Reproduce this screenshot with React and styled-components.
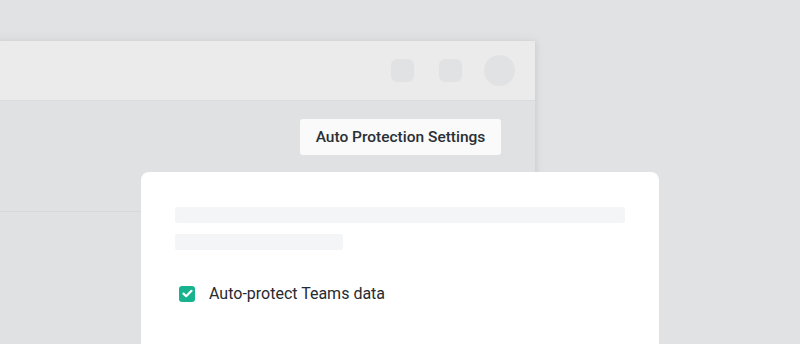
import React from 'react';
import styled, { createGlobalStyle } from 'styled-components';

const GlobalStyle = createGlobalStyle`
	html, body {
		margin: 0;
		padding: 0;
		background: #e1e2e4;
		font-family: Roboto, "Liberation Sans", sans-serif;
		overflow: hidden;
	}
`;

const Stage = styled.div`
	position: relative;
	width: 800px;
	height: 344px;
	overflow: hidden;
	padding-top: 41px;
	box-sizing: border-box;
`;

const Window = styled.div`
	margin-left: -10px;
	width: 545px;
	height: 340px;
	background: #e0e1e3;
	box-shadow: 0 0 12px rgba(0, 0, 0, 0.06), 2px 0 4px rgba(0, 0, 0, 0.04);
	display: flex;
	flex-direction: column;
`;

const Toolbar = styled.div`
	height: 59px;
	background: #ebebeb;
	border-bottom: 1px solid #dadbdd;
	display: flex;
	align-items: center;
	justify-content: flex-end;
	padding-right: 20px;
	gap: 25px;
`;

const ToolButton = styled.div`
	width: ${p => p.round ? 31 : 23}px;
	height: ${p => p.round ? 31 : 23}px;
	border-radius: ${p => p.round ? '50%' : '6px'};
	background: #e1e2e4;
	margin-left: ${p => p.round ? -3 : 0}px;
`;

const Body = styled.div`
	height: 111px;
	border-bottom: 1px solid #d8d9db;
	display: flex;
	justify-content: flex-end;
	align-items: flex-start;
	padding: 18px 34px 0 0;
	box-sizing: border-box;
`;

const SettingsButton = styled.button`
	width: 201px;
	height: 36px;
	border: none;
	border-radius: 3px;
	background: #fafafa;
	color: #2b2f36;
	font-family: Roboto, "Liberation Sans", sans-serif;
	font-size: 15.5px;
	font-weight: 500;
	padding: 0;
`;

const Card = styled.div`
	position: absolute;
	left: 141px;
	top: 172px;
	width: 518px;
	height: 200px;
	background: #ffffff;
	border-radius: 8px;
	padding: 35px 34px 0 34px;
	box-sizing: border-box;
	display: flex;
	flex-direction: column;
`;

const Skeleton = styled.div`
	width: ${p => p.width}px;
	height: 16px;
	border-radius: 2px;
	background: #f4f5f7;
	margin-bottom: 11px;
`;

const CheckRow = styled.label`
	display: flex;
	align-items: center;
	gap: 14px;
	margin-top: 23px;
	margin-left: 4px;
	color: #262a31;
	font-size: 16px;
`;

const CheckBox = styled.span`
	width: 16px;
	height: 16px;
	border-radius: 3px;
	background: #17b38f;
	display: flex;
	align-items: center;
	justify-content: center;
`;

export default function App() {
	return (
		<>
			<GlobalStyle />
			<Stage>
				<Window>
					<Toolbar>
						<ToolButton />
						<ToolButton />
						<ToolButton round />
					</Toolbar>
					<Body>
						<SettingsButton>Auto Protection Settings</SettingsButton>
					</Body>
				</Window>
				<Card>
					<Skeleton width={450} />
					<Skeleton width={168} />
					<CheckRow>
						<CheckBox>
							<svg width="11" height="9" viewBox="0 0 11 9">
								<path d="M1.5 4.6 L4.2 7.2 L9.5 1.8" fill="none" stroke="#fff" strokeWidth="2.2" strokeLinecap="round" strokeLinejoin="round" />
							</svg>
						</CheckBox>
						Auto-protect Teams data
					</CheckRow>
				</Card>
			</Stage>
		</>
	);
}
